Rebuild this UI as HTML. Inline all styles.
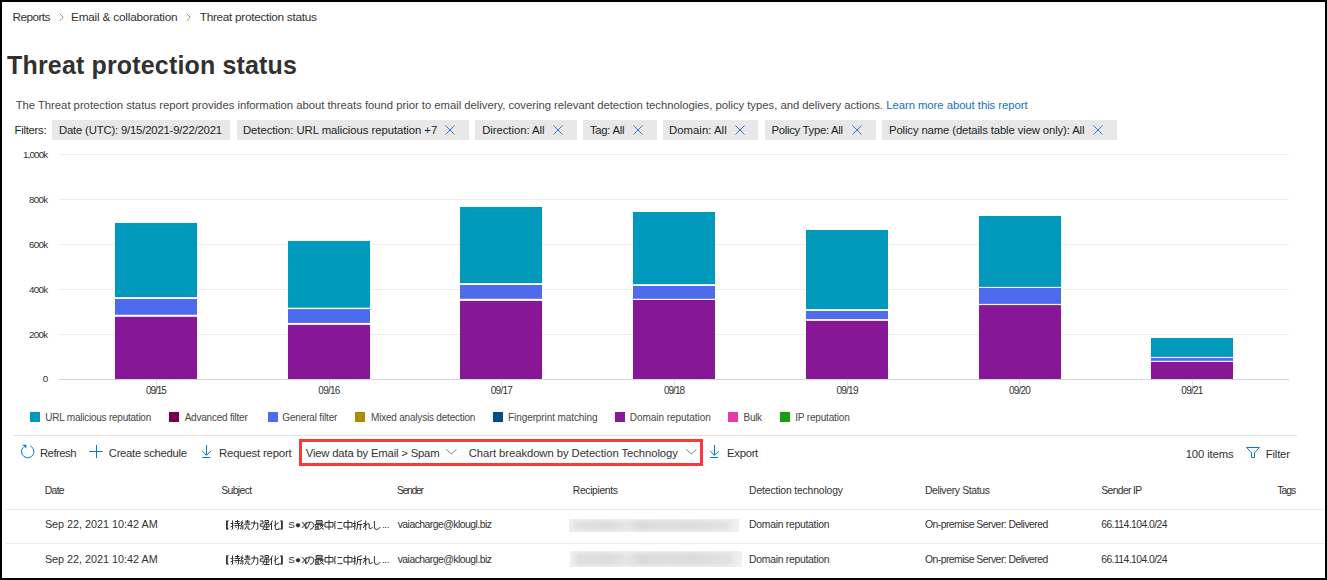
<!DOCTYPE html>
<html><head><meta charset="utf-8">
<style>
*{margin:0;padding:0;box-sizing:border-box}
html,body{width:1327px;height:580px;overflow:hidden;background:#fff}
body{font-family:"Liberation Sans",sans-serif;color:#323130;position:relative}
.frame{position:absolute;left:0;top:0;width:1327px;height:580px;border:2px solid #000;z-index:50}
.m{position:absolute;white-space:nowrap;line-height:1}
.pill{position:absolute;top:120px;height:20px;background:#e8e8e8}
.x{position:absolute;top:124.5px;width:10px;height:10px}
.grid{position:absolute;left:59px;width:1230px;height:1px;background:#eeeeee}
.bar{position:absolute;width:82px}
.tick{position:absolute;width:1px;height:7px;top:380px;background:#dfe3f0}
.sq{position:absolute;top:412px;width:10px;height:10px}
.row{position:absolute;left:6px;width:1319px;height:1px;background:#edebe9}
.blur{position:absolute;overflow:hidden;background:#efefef}
.blur i{position:absolute;left:5px;right:9px;top:2px;bottom:2px;background:linear-gradient(90deg,#e0e0e0 0%,#dadada 22%,#e6e6e6 33%,#d8d8d8 42%,#dcdcdc 55%,#dadada 75%,#e2e2e2 100%);filter:blur(2px)}
</style></head><body>
<div class="frame"></div>
<svg style="position:absolute;left:59px;top:13px" width="6" height="9"><path d="M0.7 0.7 L4.3 4.3 L0.7 7.9" fill="none" stroke="#8a8886" stroke-width="0.95"/></svg>
<svg style="position:absolute;left:186px;top:13px" width="6" height="9"><path d="M0.7 0.7 L4.3 4.3 L0.7 7.9" fill="none" stroke="#8a8886" stroke-width="0.95"/></svg>
<div class="pill" style="left:52px;width:178px"></div>
<div class="pill" style="left:237px;width:232px"></div>
<div class="pill" style="left:475px;width:102px"></div>
<div class="pill" style="left:583px;width:74px"></div>
<div class="pill" style="left:663px;width:95px"></div>
<div class="pill" style="left:765px;width:111px"></div>
<div class="pill" style="left:882px;width:235px"></div>
<svg class="x" style="left:445.0px"><path d="M0.5 0.5 L9.5 9.5 M9.5 0.5 L0.5 9.5" stroke="#2b74d0" stroke-width="0.95"/></svg>
<svg class="x" style="left:553.0px"><path d="M0.5 0.5 L9.5 9.5 M9.5 0.5 L0.5 9.5" stroke="#2b74d0" stroke-width="0.95"/></svg>
<svg class="x" style="left:633.0px"><path d="M0.5 0.5 L9.5 9.5 M9.5 0.5 L0.5 9.5" stroke="#2b74d0" stroke-width="0.95"/></svg>
<svg class="x" style="left:735.0px"><path d="M0.5 0.5 L9.5 9.5 M9.5 0.5 L0.5 9.5" stroke="#2b74d0" stroke-width="0.95"/></svg>
<svg class="x" style="left:852.0px"><path d="M0.5 0.5 L9.5 9.5 M9.5 0.5 L0.5 9.5" stroke="#2b74d0" stroke-width="0.95"/></svg>
<svg class="x" style="left:1093.0px"><path d="M0.5 0.5 L9.5 9.5 M9.5 0.5 L0.5 9.5" stroke="#2b74d0" stroke-width="0.95"/></svg>

<div class="grid" style="top:154px"></div>
<div class="grid" style="top:199px"></div>
<div class="grid" style="top:244px"></div>
<div class="grid" style="top:289px"></div>
<div class="grid" style="top:334px"></div>
<div class="grid" style="top:379px;background:#d0d6e6"></div>

<svg style="position:absolute;left:0;top:0" width="1327" height="400"><rect x="115" y="223" width="82" height="74.10" fill="#0099bc"/><rect x="115" y="299" width="82" height="15.75" fill="#4f6bed"/><rect x="115" y="316.8" width="82" height="62.20" fill="#881798"/><rect x="288" y="241" width="82" height="66.70" fill="#0099bc"/><rect x="288" y="309.1" width="82" height="13.80" fill="#4f6bed"/><rect x="288" y="324.9" width="82" height="54.10" fill="#881798"/><rect x="460" y="207" width="82" height="76.10" fill="#0099bc"/><rect x="460" y="285" width="82" height="13.80" fill="#4f6bed"/><rect x="460" y="300.9" width="82" height="78.10" fill="#881798"/><rect x="633" y="212" width="82" height="72.20" fill="#0099bc"/><rect x="633" y="286" width="82" height="12.80" fill="#4f6bed"/><rect x="633" y="300" width="82" height="79.00" fill="#881798"/><rect x="806" y="230" width="82" height="79.10" fill="#0099bc"/><rect x="806" y="311" width="82" height="8.10" fill="#4f6bed"/><rect x="806" y="320.9" width="82" height="58.10" fill="#881798"/><rect x="979" y="216" width="82" height="70.90" fill="#0099bc"/><rect x="979" y="288" width="82" height="15.90" fill="#4f6bed"/><rect x="979" y="305.1" width="82" height="73.90" fill="#881798"/><rect x="1151" y="338" width="82" height="18.90" fill="#0099bc"/><rect x="1151" y="357.9" width="82" height="2.90" fill="#4f6bed"/><rect x="1151" y="361.9" width="82" height="17.10" fill="#881798"/></svg>
<div class="tick" style="left:156px"></div>
<div class="tick" style="left:329px"></div>
<div class="tick" style="left:501px"></div>
<div class="tick" style="left:674px"></div>
<div class="tick" style="left:847px"></div>
<div class="tick" style="left:1019px"></div>
<div class="tick" style="left:1192px"></div>

<div class="sq" style="left:30px;background:#0099bc"></div>
<div class="sq" style="left:169px;background:#77004d"></div>
<div class="sq" style="left:268px;background:#4f6bed"></div>
<div class="sq" style="left:355px;background:#ae8c00"></div>
<div class="sq" style="left:493px;background:#004e8c"></div>
<div class="sq" style="left:615px;background:#881798"></div>
<div class="sq" style="left:728px;background:#e43ba6"></div>
<div class="sq" style="left:780px;background:#13a10e"></div>

<div style="position:absolute;left:14px;top:435px;width:1283px;height:1px;background:#e1dfdd"></div>

<svg style="position:absolute;left:20px;top:444px" width="16" height="16"><path d="M3.3 3.2 A6.2 6.2 0 1 0 10.2 1.9" fill="none" stroke="#0078d4" stroke-width="1"/><path d="M2.2 0.7 H6.3 V4.6 Z" fill="#0078d4"/></svg>
<svg style="position:absolute;left:89px;top:445px" width="14" height="14"><path d="M7.5 0 V13 M0.2 6.5 H13.6" stroke="#0078d4" stroke-width="1"/></svg>
<svg style="position:absolute;left:200px;top:444px" width="13" height="15"><path d="M6.5 1 V11 M2.2 7 L6.5 11.3 L10.8 7 M2.2 13.5 H10.2" fill="none" stroke="#0078d4" stroke-width="1"/></svg>
<div style="position:absolute;left:299px;top:439px;width:404px;height:27px;border:3px solid #f93a3c"></div>
<svg style="position:absolute;left:446px;top:449px" width="11" height="6"><path d="M0.3 0.3 L5.3 5 L10.5 0.3" fill="none" stroke="#7a7876" stroke-width="0.95"/></svg>
<svg style="position:absolute;left:685.5px;top:449px" width="11" height="6"><path d="M0.3 0.3 L5.3 5 L10.5 0.3" fill="none" stroke="#7a7876" stroke-width="0.95"/></svg>
<svg style="position:absolute;left:708px;top:444px" width="13" height="15"><path d="M6.5 1 V11 M2.2 7 L6.5 11.3 L10.8 7 M2.2 13.5 H10.2" fill="none" stroke="#0078d4" stroke-width="1"/></svg>
<svg style="position:absolute;left:1246px;top:447px" width="15" height="12"><path d="M0.6 0.5 H13.4 L8.5 5.8 V10.5 H5.5 V5.8 Z" fill="none" stroke="#0078d4" stroke-width="1" stroke-linejoin="miter"/></svg>

<div class="row" style="top:509px"></div>
<div class="row" style="top:543px"></div>
<div class="blur" style="left:569px;top:519px;width:170px;height:13px"><i></i></div>
<div class="blur" style="left:570px;top:551px;width:172px;height:16px"><i></i></div>
<svg style="position:absolute;left:220px;top:520px" width="175" height="11" fill="none" stroke="#323130" stroke-width="1"><g transform="translate(5,0)"><path d="M1 0.5 H4.2 L2.8 2 V8 L4.2 9.5 H1 Z" fill="#323130" stroke="none"/></g><g transform="translate(10,0)"><path d="M0.5 3.5 H3.5 M2.5 0.5 V9 L1.5 9.5 M0.5 7 L3.5 5.5 M5 1.5 H9.5 M7.5 0 V3.5 M4.5 3.5 H10 M4.5 5.5 H10 M8.5 4 V9 L7.5 9.5 M5.5 6.5 L6.5 8"/></g><g transform="translate(20,0)"><path d="M2.5 0.5 L0.8 3 L3.2 3.5 M3 2 L0.5 6 H3.8 M2.2 5.5 V9.8 M0.8 7.5 L0.3 9 M3.3 7.5 L3.8 8.5 M5 1.2 H9.8 M7.4 0 V2.8 M5.5 2.8 H9.5 M4.5 5 V4.2 H10 V5 M6.3 5.5 V7 L4.8 9.7 M8 5.5 V9 L10 9.4"/></g><g transform="translate(29.30000000000001,0)"><path d="M1.5 3 H8.5 V9 L7 9.5 M5 0.5 V4 Q4.5 7.5 1.5 9.8"/></g><g transform="translate(39.5,0)"><path d="M0.5 1 H3.5 V3.8 H0.8 V6.3 H3.8 V9.2 L2.8 9.7 M5.5 0.5 H9 V2.8 H5.5 Z M4.8 4.2 H9.5 V7 H4.8 Z M7.2 3 V9.5 M4.5 9.5 H10"/></g><g transform="translate(49.5,0)"><path d="M3 0.5 Q2 3 0.5 5 M2 3 V9.8 M9.2 2.5 L4.5 6 M5.8 0.5 V8.8 Q5.8 9.5 6.5 9.5 H9.5 V7.8"/></g><g transform="translate(59,0)"><path d="M3.8 0.5 H0.6 L2 2 V8 L0.6 9.5 H3.8 Z" fill="#323130" stroke="none"/></g><g transform="translate(84.5,0)"><path d="M5.2 2.2 Q4.2 7.5 2 8.8 Q0.5 9.2 0.8 6.5 Q1.5 2.2 5.5 2 Q9.5 2 9.3 5.8 Q9 8.8 5.5 9.5"/></g><g transform="translate(94.19999999999999,0)"><path d="M2 0.5 H8 V3.5 H2 Z M2 2 H8 M0.5 4.5 H9.5 M1.5 4.5 V9.2 M4 4.5 V9.5 M1.5 6.2 H4 M1.5 7.8 H4 M0.5 9.5 L5 9" stroke-width="0.9"/><path d="M5.5 5.5 H9 Q8 8 5 9.6 M6 6.2 Q7.5 8.5 10 9.6" stroke-width="0.9"/></g><g transform="translate(104,0)"><path d="M1 2.5 H9 V7 H1 Z M5 0 V10"/></g><g transform="translate(113.5,0)"><path d="M1.5 1 Q1 5 1.5 9 M4 2.5 H8.5 M4 8.5 Q6 9 9 8.5"/></g><g transform="translate(123,0)"><path d="M1 2.5 H9 V7 H1 Z M5 0 V10"/></g><g transform="translate(132.3,0)"><path d="M0.5 3.5 H3.5 M2.5 0.5 V9 L1.5 9.5 M0.5 7 L3.5 5.5 M9.5 0.5 Q7.5 1.5 5.2 2 V6 Q5 8.5 4 9.8 M5.2 4.5 H10 M8 4.5 V10"/></g><g transform="translate(142.7,0)"><path d="M3 0.5 V10 M0.5 3.5 H3 L0.5 8 M3 5.5 Q5.5 2.5 6.5 4 V8.2 Q6.8 9.5 10 7.5"/></g><g transform="translate(151.39999999999998,0)"><path d="M3 1 V7 Q3 9.5 5 9.5 Q7.5 9.3 9 7"/></g></svg><svg style="position:absolute;left:220px;top:555px" width="175" height="11" fill="none" stroke="#323130" stroke-width="1"><g transform="translate(5,0)"><path d="M1 0.5 H4.2 L2.8 2 V8 L4.2 9.5 H1 Z" fill="#323130" stroke="none"/></g><g transform="translate(10,0)"><path d="M0.5 3.5 H3.5 M2.5 0.5 V9 L1.5 9.5 M0.5 7 L3.5 5.5 M5 1.5 H9.5 M7.5 0 V3.5 M4.5 3.5 H10 M4.5 5.5 H10 M8.5 4 V9 L7.5 9.5 M5.5 6.5 L6.5 8"/></g><g transform="translate(20,0)"><path d="M2.5 0.5 L0.8 3 L3.2 3.5 M3 2 L0.5 6 H3.8 M2.2 5.5 V9.8 M0.8 7.5 L0.3 9 M3.3 7.5 L3.8 8.5 M5 1.2 H9.8 M7.4 0 V2.8 M5.5 2.8 H9.5 M4.5 5 V4.2 H10 V5 M6.3 5.5 V7 L4.8 9.7 M8 5.5 V9 L10 9.4"/></g><g transform="translate(29.30000000000001,0)"><path d="M1.5 3 H8.5 V9 L7 9.5 M5 0.5 V4 Q4.5 7.5 1.5 9.8"/></g><g transform="translate(39.5,0)"><path d="M0.5 1 H3.5 V3.8 H0.8 V6.3 H3.8 V9.2 L2.8 9.7 M5.5 0.5 H9 V2.8 H5.5 Z M4.8 4.2 H9.5 V7 H4.8 Z M7.2 3 V9.5 M4.5 9.5 H10"/></g><g transform="translate(49.5,0)"><path d="M3 0.5 Q2 3 0.5 5 M2 3 V9.8 M9.2 2.5 L4.5 6 M5.8 0.5 V8.8 Q5.8 9.5 6.5 9.5 H9.5 V7.8"/></g><g transform="translate(59,0)"><path d="M3.8 0.5 H0.6 L2 2 V8 L0.6 9.5 H3.8 Z" fill="#323130" stroke="none"/></g><g transform="translate(84.5,0)"><path d="M5.2 2.2 Q4.2 7.5 2 8.8 Q0.5 9.2 0.8 6.5 Q1.5 2.2 5.5 2 Q9.5 2 9.3 5.8 Q9 8.8 5.5 9.5"/></g><g transform="translate(94.19999999999999,0)"><path d="M2 0.5 H8 V3.5 H2 Z M2 2 H8 M0.5 4.5 H9.5 M1.5 4.5 V9.2 M4 4.5 V9.5 M1.5 6.2 H4 M1.5 7.8 H4 M0.5 9.5 L5 9" stroke-width="0.9"/><path d="M5.5 5.5 H9 Q8 8 5 9.6 M6 6.2 Q7.5 8.5 10 9.6" stroke-width="0.9"/></g><g transform="translate(104,0)"><path d="M1 2.5 H9 V7 H1 Z M5 0 V10"/></g><g transform="translate(113.5,0)"><path d="M1.5 1 Q1 5 1.5 9 M4 2.5 H8.5 M4 8.5 Q6 9 9 8.5"/></g><g transform="translate(123,0)"><path d="M1 2.5 H9 V7 H1 Z M5 0 V10"/></g><g transform="translate(132.3,0)"><path d="M0.5 3.5 H3.5 M2.5 0.5 V9 L1.5 9.5 M0.5 7 L3.5 5.5 M9.5 0.5 Q7.5 1.5 5.2 2 V6 Q5 8.5 4 9.8 M5.2 4.5 H10 M8 4.5 V10"/></g><g transform="translate(142.7,0)"><path d="M3 0.5 V10 M0.5 3.5 H3 L0.5 8 M3 5.5 Q5.5 2.5 6.5 4 V8.2 Q6.8 9.5 10 7.5"/></g><g transform="translate(151.39999999999998,0)"><path d="M3 1 V7 Q3 9.5 5 9.5 Q7.5 9.3 9 7"/></g></svg><div class="m" id="bc1" style="top:12.01px;font-size:11.8px;color:#323130;font-weight:normal;letter-spacing:-0.550px;left:12.42px">Reports</div>
<div class="m" id="bc2" style="top:12.01px;font-size:11.8px;color:#323130;font-weight:normal;letter-spacing:-0.205px;left:70.98px">Email &amp; collaboration</div>
<div class="m" id="bc3" style="top:12.01px;font-size:11.8px;color:#323130;font-weight:normal;letter-spacing:-0.300px;left:199.78px">Threat protection status</div>
<div class="m" id="title" style="top:52.74px;font-size:25px;color:#323130;font-weight:bold;letter-spacing:0.157px;left:7.12px">Threat protection status</div>
<div class="m" id="desc" style="top:100.23px;font-size:11.3px;color:#474644;font-weight:normal;letter-spacing:-0.022px;left:15.68px">The Threat protection status report provides information about threats found prior to email delivery, covering relevant detection technologies, policy types, and delivery actions.</div>
<div class="m" id="link" style="top:100.23px;font-size:11.3px;color:#1470c4;font-weight:normal;letter-spacing:-0.041px;left:886.20px">Learn more about this report</div>
<div class="m" id="filters" style="top:125.43px;font-size:11.3px;color:#201f1e;font-weight:normal;letter-spacing:-0.271px;left:14.54px">Filters:</div>
<div class="m" id="p1" style="top:125.43px;font-size:11.3px;color:#201f1e;font-weight:normal;letter-spacing:-0.173px;left:58.98px">Date (UTC): 9/15/2021-9/22/2021</div>
<div class="m" id="p2" style="top:125.43px;font-size:11.3px;color:#201f1e;font-weight:normal;letter-spacing:-0.043px;left:242.98px">Detection: URL malicious reputation +7</div>
<div class="m" id="p3" style="top:125.43px;font-size:11.3px;color:#201f1e;font-weight:normal;letter-spacing:-0.046px;left:482.22px">Direction: All</div>
<div class="m" id="p4" style="top:125.43px;font-size:11.3px;color:#201f1e;font-weight:normal;letter-spacing:-0.286px;left:590.00px">Tag: All</div>
<div class="m" id="p5" style="top:125.43px;font-size:11.3px;color:#201f1e;font-weight:normal;letter-spacing:0.060px;left:668.98px">Domain: All</div>
<div class="m" id="p6" style="top:125.43px;font-size:11.3px;color:#201f1e;font-weight:normal;letter-spacing:-0.280px;left:771.44px">Policy Type: All</div>
<div class="m" id="p7" style="top:125.43px;font-size:11.3px;color:#201f1e;font-weight:normal;letter-spacing:-0.117px;left:889.00px">Policy name (details table view only): All</div>
<div class="m" id="lg1" style="top:412.54px;font-size:10px;color:#484644;font-weight:normal;letter-spacing:-0.235px;left:45.32px">URL malicious reputation</div>
<div class="m" id="lg2" style="top:412.54px;font-size:10px;color:#484644;font-weight:normal;letter-spacing:-0.221px;left:184.66px">Advanced filter</div>
<div class="m" id="lg3" style="top:412.54px;font-size:10px;color:#484644;font-weight:normal;letter-spacing:-0.162px;left:282.32px">General filter</div>
<div class="m" id="lg4" style="top:412.54px;font-size:10px;color:#484644;font-weight:normal;letter-spacing:-0.200px;left:371.00px">Mixed analysis detection</div>
<div class="m" id="lg5" style="top:412.54px;font-size:10px;color:#484644;font-weight:normal;letter-spacing:-0.095px;left:508.10px">Fingerprint matching</div>
<div class="m" id="lg6" style="top:412.54px;font-size:10px;color:#484644;font-weight:normal;letter-spacing:-0.037px;left:629.76px">Domain reputation</div>
<div class="m" id="lg7" style="top:412.54px;font-size:10px;color:#484644;font-weight:normal;letter-spacing:-0.300px;left:743.54px">Bulk</div>
<div class="m" id="lg8" style="top:412.54px;font-size:10px;color:#484644;font-weight:normal;letter-spacing:-0.167px;left:795.20px">IP reputation</div>
<div class="m" id="tb1" style="top:448.23px;font-size:11.3px;color:#323130;font-weight:normal;letter-spacing:-0.517px;left:39.98px">Refresh</div>
<div class="m" id="tb2" style="top:448.23px;font-size:11.3px;color:#323130;font-weight:normal;letter-spacing:-0.286px;left:108.78px">Create schedule</div>
<div class="m" id="tb3" style="top:448.23px;font-size:11.3px;color:#323130;font-weight:normal;letter-spacing:-0.162px;left:219.10px">Request report</div>
<div class="m" id="tb4" style="top:448.23px;font-size:11.3px;color:#323130;font-weight:normal;letter-spacing:-0.183px;left:305.78px">View data by Email &gt; Spam</div>
<div class="m" id="tb5" style="top:448.23px;font-size:11.3px;color:#323130;font-weight:normal;letter-spacing:-0.076px;left:468.78px">Chart breakdown by Detection Technology</div>
<div class="m" id="tb6" style="top:448.23px;font-size:11.3px;color:#323130;font-weight:normal;letter-spacing:-0.300px;left:727.10px">Export</div>
<div class="m" id="tb7" style="top:449.13px;font-size:11.3px;color:#323130;font-weight:normal;letter-spacing:-0.112px;left:1185.64px">100 items</div>
<div class="m" id="tb8" style="top:449.13px;font-size:11.3px;color:#323130;font-weight:normal;letter-spacing:-0.180px;left:1265.76px">Filter</div>
<div class="m" id="th1" style="top:486.20px;font-size:10.4px;color:#323130;font-weight:normal;letter-spacing:-0.700px;left:44.76px">Date</div>
<div class="m" id="th2" style="top:486.20px;font-size:10.4px;color:#323130;font-weight:normal;letter-spacing:-0.650px;left:221.34px">Subject</div>
<div class="m" id="th3" style="top:486.20px;font-size:10.4px;color:#323130;font-weight:normal;letter-spacing:-1.300px;left:397.00px">Sender</div>
<div class="m" id="th4" style="top:486.20px;font-size:10.4px;color:#323130;font-weight:normal;letter-spacing:-0.367px;left:572.76px">Recipients</div>
<div class="m" id="th5" style="top:486.20px;font-size:10.4px;color:#323130;font-weight:normal;letter-spacing:-0.163px;left:749.10px">Detection technology</div>
<div class="m" id="th6" style="top:486.20px;font-size:10.4px;color:#323130;font-weight:normal;letter-spacing:-0.350px;left:924.88px">Delivery Status</div>
<div class="m" id="th7" style="top:486.20px;font-size:10.4px;color:#323130;font-weight:normal;letter-spacing:-0.650px;left:1101.22px">Sender IP</div>
<div class="m" id="th8" style="top:486.20px;font-size:10.4px;color:#323130;font-weight:normal;letter-spacing:-1.000px;left:1277.34px">Tags</div>
<div class="m" id="d1_0" style="top:518.96px;font-size:10.8px;color:#323130;font-weight:normal;letter-spacing:-0.005px;left:44.88px">Sep 22, 2021 10:42 AM</div>
<div class="m" id="sx_0" style="top:519.80px;font-size:9.8px;color:#323130;font-weight:normal;letter-spacing:0.200px;left:288.30px">S&#9679;X</div>
<div class="m" id="dots_0" style="top:519.80px;font-size:9.8px;color:#323130;font-weight:normal;letter-spacing:-0.300px;left:381.90px">...</div>
<div class="m" id="d3_0" style="top:520.30px;font-size:10.4px;color:#323130;font-weight:normal;letter-spacing:-0.525px;left:397.68px">vaiacharge@klougl.biz</div>
<div class="m" id="d5_0" style="top:520.30px;font-size:10.4px;color:#323130;font-weight:normal;letter-spacing:-0.281px;left:749.10px">Domain reputation</div>
<div class="m" id="d6_0" style="top:520.30px;font-size:10.4px;color:#323130;font-weight:normal;letter-spacing:-0.519px;left:924.88px">On-premise Server: Delivered</div>
<div class="m" id="d7_0" style="top:520.30px;font-size:10.4px;color:#323130;font-weight:normal;letter-spacing:-0.579px;left:1101.22px">66.114.104.0/24</div>
<div class="m" id="d1_1" style="top:554.16px;font-size:10.8px;color:#323130;font-weight:normal;letter-spacing:-0.005px;left:44.88px">Sep 22, 2021 10:42 AM</div>
<div class="m" id="sx_1" style="top:555.00px;font-size:9.8px;color:#323130;font-weight:normal;letter-spacing:0.200px;left:288.30px">S&#9679;X</div>
<div class="m" id="dots_1" style="top:555.00px;font-size:9.8px;color:#323130;font-weight:normal;letter-spacing:-0.300px;left:381.90px">...</div>
<div class="m" id="d3_1" style="top:554.50px;font-size:10.4px;color:#323130;font-weight:normal;letter-spacing:-0.525px;left:397.68px">vaiacharge@klougl.biz</div>
<div class="m" id="d5_1" style="top:554.50px;font-size:10.4px;color:#323130;font-weight:normal;letter-spacing:-0.281px;left:749.10px">Domain reputation</div>
<div class="m" id="d6_1" style="top:554.50px;font-size:10.4px;color:#323130;font-weight:normal;letter-spacing:-0.519px;left:924.88px">On-premise Server: Delivered</div>
<div class="m" id="d7_1" style="top:554.50px;font-size:10.4px;color:#323130;font-weight:normal;letter-spacing:-0.579px;left:1101.22px">66.114.104.0/24</div>
<div class="m" id="y_1,000k" style="top:149.70px;font-size:9.8px;color:#323130;font-weight:normal;letter-spacing:-0.840px;left:23.00px">1,000k</div>
<div class="m" id="y_800k" style="top:194.70px;font-size:9.8px;color:#323130;font-weight:normal;letter-spacing:-0.733px;left:29.00px">800k</div>
<div class="m" id="y_600k" style="top:239.70px;font-size:9.8px;color:#323130;font-weight:normal;letter-spacing:-0.733px;left:29.00px">600k</div>
<div class="m" id="y_400k" style="top:284.70px;font-size:9.8px;color:#323130;font-weight:normal;letter-spacing:-0.733px;left:29.00px">400k</div>
<div class="m" id="y_200k" style="top:329.70px;font-size:9.8px;color:#323130;font-weight:normal;letter-spacing:-0.733px;left:29.00px">200k</div>
<div class="m" id="y_0" style="top:373.70px;font-size:9.8px;color:#323130;font-weight:normal;letter-spacing:-3.000px;left:42.74px">0</div>
<div class="m" id="x_09/15" style="top:386.04px;font-size:10px;color:#323130;font-weight:normal;letter-spacing:-1.000px;left:145.90px">09/15</div>
<div class="m" id="x_09/16" style="top:386.04px;font-size:10px;color:#323130;font-weight:normal;letter-spacing:-0.750px;left:318.34px">09/16</div>
<div class="m" id="x_09/17" style="top:386.04px;font-size:10px;color:#323130;font-weight:normal;letter-spacing:-0.750px;left:490.78px">09/17</div>
<div class="m" id="x_09/18" style="top:386.04px;font-size:10px;color:#323130;font-weight:normal;letter-spacing:-1.000px;left:664.01px">09/18</div>
<div class="m" id="x_09/19" style="top:386.04px;font-size:10px;color:#323130;font-weight:normal;letter-spacing:-0.750px;left:836.45px">09/19</div>
<div class="m" id="x_09/20" style="top:386.04px;font-size:10px;color:#323130;font-weight:normal;letter-spacing:-0.750px;left:1008.89px">09/20</div>
<div class="m" id="x_09/21" style="top:386.04px;font-size:10px;color:#323130;font-weight:normal;letter-spacing:-0.750px;left:1181.33px">09/21</div>
</body></html>
